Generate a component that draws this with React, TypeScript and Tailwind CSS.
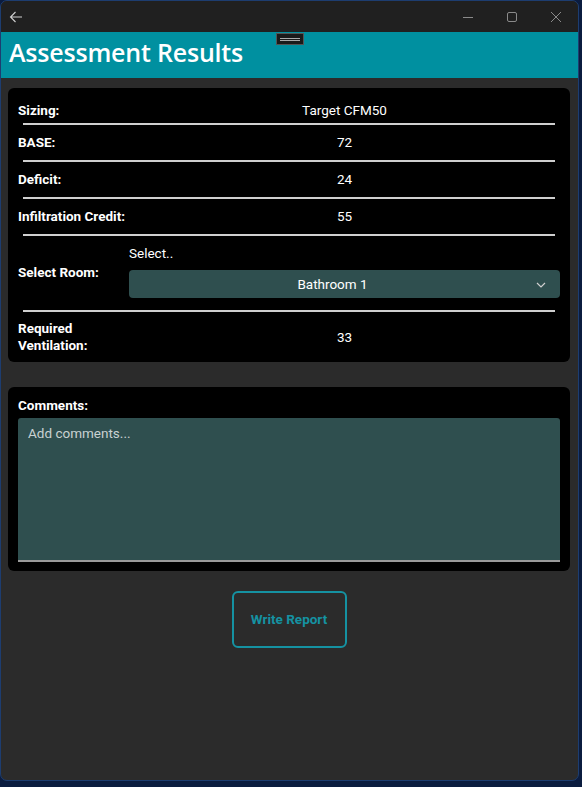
import React from "react";

const Row = ({ label, value, h }: { label: React.ReactNode; value: string; h: string }) => (
  <div className={`flex items-center ${h}`}>
    <div className="w-[111px] font-bold text-[13.5px] leading-[17px]">{label}</div>
    <div className="flex-1 text-center text-[13.5px]">{value}</div>
  </div>
);

const Line = () => <div className="mx-[5px] h-[2px] bg-[#cfcfcf]" />;

export default function App() {
  return (
    <div className="w-[582px] h-[787px] bg-[#0b1c3f] overflow-hidden" style={{ fontFamily: "Roboto, 'Liberation Sans', sans-serif" }}>
      <div className="w-[579px] h-[781px] bg-[#2b2b2b] rounded-[7px] border border-[#1d3d70] overflow-hidden flex flex-col">
        {/* title bar */}
        <div className="h-[31px] bg-[#202020] flex items-center text-[#c8c8c8] shrink-0">
          <svg width="14" height="12" viewBox="0 0 14 12" className="ml-[8px]" fill="none" stroke="#d0d0d0" strokeWidth="1.1">
            <path d="M13 6H1.5M6.5 1L1.5 6l5 5" />
          </svg>
          <div className="flex-1" />
          <svg width="12" height="12" viewBox="0 0 12 12" className="mr-[32px]" fill="none" stroke="#8a8a8a" strokeWidth="1">
            <path d="M1 6.5h10" />
          </svg>
          <svg width="12" height="12" viewBox="0 0 12 12" className="mr-[32px]" fill="none" stroke="#8a8a8a" strokeWidth="1">
            <rect x="1.5" y="1.5" width="9" height="9" rx="1.5" />
          </svg>
          <svg width="12" height="12" viewBox="0 0 12 12" className="mr-[16px]" fill="none" stroke="#8a8a8a" strokeWidth="1">
            <path d="M1 1l10 10M11 1L1 11" />
          </svg>
        </div>
        {/* header */}
        <div className="relative h-[46px] bg-[#0090a0] flex items-center shrink-0">
          <div className="absolute left-[275px] top-[1px] w-[28px] h-[12px] bg-[#1a1a1a] border border-[#555] flex items-center justify-center">
            <div className="w-[20px] h-[3px] border-t border-b border-[#aaa]" />
          </div>
          <h1 className="ml-[8px] text-white text-[25px] font-semibold leading-none -mt-[5px] tracking-[-0.2px]" style={{ fontFamily: "'Open Sans', 'Noto Sans', sans-serif" }}>
            Assessment Results
          </h1>
        </div>
        {/* body */}
        <div className="pl-[7px] pr-[8px] pt-[10px] flex flex-col text-white">
          <div className="bg-black rounded-[6px] px-[10px] pt-[10px]">
            <Row label="Sizing:" value="Target CFM50" h="h-[25px]" />
            <Line />
            <Row label="BASE:" value="72" h="h-[35px]" />
            <Line />
            <Row label="Deficit:" value="24" h="h-[35px]" />
            <Line />
            <Row label="Infiltration Credit:" value="55" h="h-[35px]" />
            <Line />
            <div className="flex items-center pt-[9px] pb-[12px]">
              <div className="w-[111px] font-bold text-[13.5px] mt-[1px]">Select Room:</div>
              <div className="flex-1 flex flex-col">
                <div className="text-[13.5px] leading-[17px] mb-[8px]">Select..</div>
                <div className="h-[28px] bg-[#2f4f4f] rounded-[4px] flex items-center relative">
                  <div className="flex-1 text-center text-[13.5px] pr-[24px]">Bathroom 1</div>
                  <svg width="10" height="6" viewBox="0 0 10 6" className="absolute right-[14px] top-[12px]" fill="none" stroke="#d0d0d0" strokeWidth="1.2">
                    <path d="M1 1l4 4 4-4" />
                  </svg>
                </div>
              </div>
            </div>
            <Line />
            <div className="flex items-center h-[50px]">
              <div className="w-[111px] font-bold text-[13.5px] leading-[17px]">Required<br />Ventilation:</div>
              <div className="flex-1 text-center text-[13.5px]">33</div>
            </div>
          </div>

          <div className="mt-[25px] bg-black rounded-[6px] px-[10px] pt-[10px] pb-[9px]">
            <div className="font-bold text-[13.5px] leading-[17px] mb-[4px]">Comments:</div>
            <div className="h-[144px] bg-[#2f4f4f] rounded-t-[3px] border-b-2 border-[#9a9a9a] px-[10px] pt-[5px] text-[13.5px] text-[#c9d2d2]">
              Add comments...
            </div>
          </div>

          <div className="flex justify-center mt-[20px]">
            <button className="w-[115px] h-[57px] border-2 border-[#1592a2] rounded-[6px] text-[#1592a2] font-bold text-[13.5px] bg-transparent">
              Write Report
            </button>
          </div>
        </div>
      </div>
    </div>
  );
}
